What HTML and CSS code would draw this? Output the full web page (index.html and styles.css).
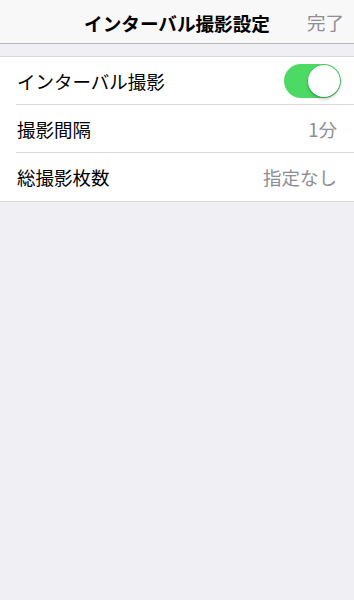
FILE: index.html
```
<!DOCTYPE html>
<html lang="ja">
<head>
<meta charset="utf-8">
<link rel="stylesheet" href="styles.css">
</head>
<body>
<div class="screen">
  <header class="navbar">
    <div class="nav-side"></div>
    <div class="nav-title">インターバル撮影設定</div>
    <div class="nav-side nav-done">完了</div>
  </header>
  <div class="group">
    <div class="row">
      <span class="label">インターバル撮影</span>
      <span class="switch on"><span class="knob"></span></span>
    </div>
    <div class="row">
      <span class="label">撮影間隔</span>
      <span class="value">1分</span>
    </div>
    <div class="row">
      <span class="label">総撮影枚数</span>
      <span class="value">指定なし</span>
    </div>
  </div>
</div>
</body>
</html>
```
FILE: styles.css
```
html, body {
  margin: 0;
  padding: 0;
  background: #efeff4;
}
body {
  font-family: "Noto Sans CJK JP", "Noto Sans", sans-serif;
  width: 354px;
  height: 600px;
  overflow: hidden;
}
.screen {
  display: flex;
  flex-direction: column;
}
.navbar {
  height: 43px;
  background: #f8f8f8;
  border-bottom: 1px solid #b8b8bc;
  display: grid;
  grid-template-columns: 1fr auto 1fr;
  align-items: center;
}
.nav-title {
  font-size: 18.6px;
  font-weight: 700;
  color: #000;
  padding-top: 1px;
}
.nav-done {
  font-size: 18.5px;
  color: #8e8e93;
  text-align: right;
  padding-right: 10px;
}
.group {
  margin-top: 12px;
  background: #fff;
  border-top: 1px solid #d8d8dc;
  border-bottom: 1px solid #d8d8dc;
}
.row {
  height: 47px;
  margin-left: 16px;
  padding-right: 17px;
  display: flex;
  align-items: center;
  justify-content: space-between;
  border-bottom: 1px solid #d9d9dd;
}
.row:last-child {
  border-bottom: none;
  height: 48px;
}
.label {
  font-size: 18.5px;
  color: #000;
  padding-left: 1px;
}
.value {
  font-size: 18.5px;
  color: #8e8e93;
}
.switch {
  width: 57px;
  height: 34px;
  border-radius: 17px;
  background: #4cd964;
  display: flex;
  align-items: center;
  justify-content: flex-end;
  padding: 0 1px;
  box-sizing: border-box;
  margin-right: -4px;
}
.knob {
  width: 32px;
  height: 32px;
  border-radius: 50%;
  background: #fff;
  box-shadow: 0 2px 3px rgba(0,0,0,0.25), 0 0 0 0.5px rgba(0,0,0,0.1);
}
```
